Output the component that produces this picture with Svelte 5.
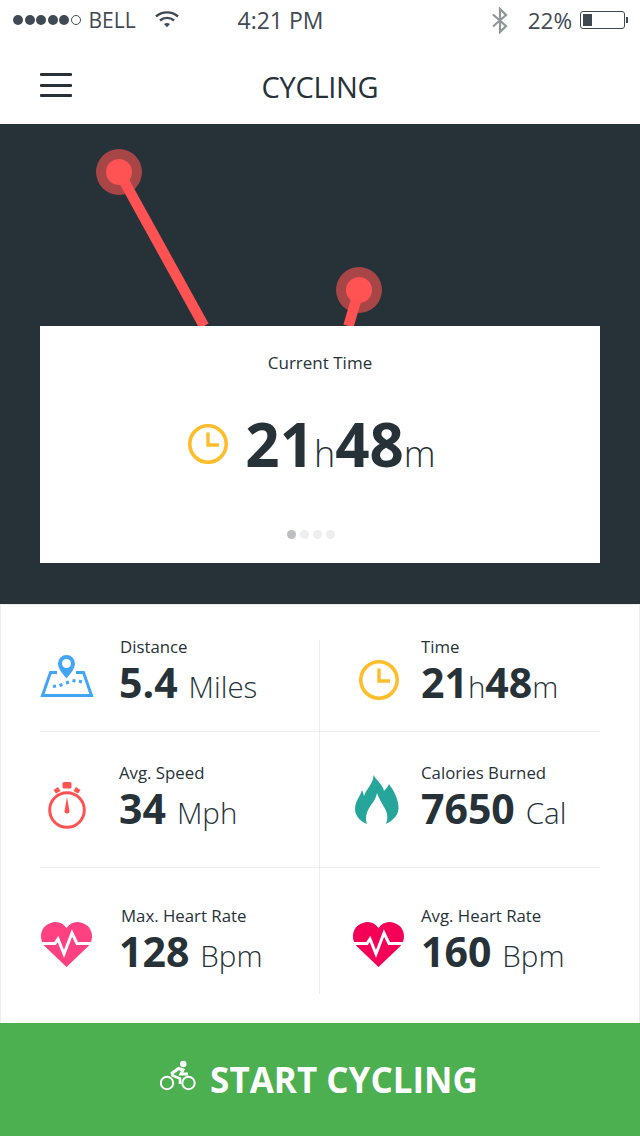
<script lang="ts">
	const stats = [
		{ label: 'Distance', value: '5.4', unit: 'Miles', icon: 'map' },
		{ label: 'Time', time: true, icon: 'clock' },
		{ label: 'Avg. Speed', value: '34', unit: 'Mph', icon: 'watch' },
		{ label: 'Calories Burned', value: '7650', unit: 'Cal', icon: 'flame' },
		{ label: 'Max. Heart Rate', value: '128', unit: 'Bpm', icon: 'heart', color: '#ff4081' },
		{ label: 'Avg. Heart Rate', value: '160', unit: 'Bpm', icon: 'heart', color: '#f50057' }
	];
</script>

{#snippet clock(size)}
	<svg width={size} height={size} viewBox="0 0 40 40" fill="none" stroke="#fdbd2c">
		<circle cx="20" cy="20" r="18.2" stroke-width="3.6" />
		<path d="M20 8.5V21H31" stroke-width="3.4" />
	</svg>
{/snippet}

<div class="page">
	<header class="status">
		<div class="dots">
			{#each [1, 2, 3, 4, 5] as d}
				<i class="dot"></i>
			{/each}
			<i class="dot empty"></i>
		</div>
		<span class="carrier">BELL</span>
		<svg class="wifi" width="24" height="18" viewBox="0 0 24 18" fill="none" stroke="#414a52" stroke-width="2.4">
			<path d="M1 6.5C7 1 17 1 23 6.5" />
			<path d="M5 10.5C9 7 15 7 19 10.5" />
			<path d="M9 14l3 3.2 3-3.2c-2-1.4-4-1.4-6 0z" fill="#414a52" stroke="none" />
		</svg>
		<span class="clock-text">4:21 PM</span>
		<div class="right">
			<svg width="18" height="27" viewBox="0 0 18 27" fill="none" stroke="#8f9598" stroke-width="2.2">
				<path d="M2 7.5L15 19 9 25V2l6 6L2 19.5" />
			</svg>
			<span class="percent">22%</span>
			<div class="battery"><div class="level"></div></div>
			<i class="nub"></i>
		</div>
	</header>

	<nav class="nav">
		<button class="menu" aria-label="Menu"><i></i><i></i><i></i></button>
		<h1>CYCLING</h1>
	</nav>

	<section class="hero">
		<svg class="chart" width="640" height="202" viewBox="0 0 640 202">
			<line x1="119" y1="48" x2="204" y2="202" stroke="#ff5252" stroke-width="10.500" />
			<circle cx="119" cy="48" r="23" fill="#ff5252" fill-opacity="0.6" />
			<circle cx="119" cy="48" r="13" fill="#ff5252" />
			<line x1="359" y1="166" x2="348.500" y2="202" stroke="#ff5252" stroke-width="10.500" />
			<circle cx="359" cy="166" r="23" fill="#ff5252" fill-opacity="0.6" />
			<circle cx="359" cy="166" r="13" fill="#ff5252" />
		</svg>
		<div class="card">
			<p class="card-label">Current Time</p>
			<div class="card-time">
				{@render clock(40)}
				<div class="big"><b>21</b><span>h</span><b>48</b><span>m</span></div>
			</div>
			<div class="pager">
				<i class="on"></i><i></i><i></i><i></i>
			</div>
		</div>
	</section>

	<section class="stats">
		{#each stats as s}
			<div class="cell">
				<div class="icon icon-{s.icon}">
					{#if s.icon === 'clock'}
						{@render clock(40)}
					{:else if s.icon === 'map'}
						<svg width="54" height="43" viewBox="0 0 54 43">
							<path d="M17 17.500H10.500L2.500 40.500H51.500L43.500 17.500H36" fill="none" stroke="#42a5f5" stroke-width="3" />
							<path d="M26.500 23.500C23 19 18 14 18 8.500A8.500 8.500 0 0 1 35 8.500C35 14 30 19 26.500 23.500Z" fill="#42a5f5" />
							<circle cx="26.500" cy="8.500" r="4.500" fill="#fff" />
							<path d="M13 31.500L16 31M19.500 30.500L22.500 29.500M26 28L29 27M32.500 25.500L35.500 26M39 26L42 27" stroke="#42a5f5" stroke-width="3" fill="none" />
						</svg>
					{:else if s.icon === 'watch'}
						<svg width="40" height="48" viewBox="0 0 40 48" fill="#ff5252">
							<circle cx="20" cy="28" r="17.300" fill="none" stroke="#ff5252" stroke-width="3" />
							<rect x="15.500" y="0" width="9" height="6.500" rx="1.500" />
							<path d="M6.500 8L11 5 13.500 9 9 11.500ZM33.500 8L29 5 26.500 9 31 11.500Z" />
							<path d="M20 15L22.500 29A2.500 2.500 0 0 1 17.500 29Z" />
						</svg>
					{:else if s.icon === 'flame'}
						<svg width="44" height="49" viewBox="0 0 44 49" fill="#26a69a">
							<path d="M18.500 0C22 6 28 10 29 16 30.500 14 33 12 34 9 39 16 44 25 43.500 34 43 41 37 46 31 49 33 44 33 38 29 32 27 28 24 24 22 18 21 23 19 26 16 30 13 34 9 42 12 49 6 47 0 41 0 34 0 26 5 22 7 15 8 17 8.500 19 9 21 11 14 18.500 9 18.500 0Z" />
						</svg>
					{:else}
						<svg width="54" height="46" viewBox="0 0 54 46">
							<path d="M26.500 46L5 25.500C-1 19 0 9 6 4.500 13 -1 22 0 26.500 7 31 0 40 -1 47 4.500 53 9 54 19 48 25.500Z" fill={s.color} />
							<path d="M0 22.500H15L18 18 24 33 32 12 37 22.500H53" fill="none" stroke="#fff" stroke-width="3" />
						</svg>
					{/if}
				</div>
				<div class="text">
					<p class="label">{s.label}</p>
					{#if s.time}
						<div class="value tight"><b>21</b><span>h</span><b>48</b><span>m</span></div>
					{:else}
						<div class="value"><b>{s.value}</b><span>{s.unit}</span></div>
					{/if}
				</div>
			</div>
		{/each}
	</section>

	<button class="start">
		<svg width="38" height="32" viewBox="0 0 38 32" fill="none" stroke="#fff" stroke-width="2">
			<circle cx="7" cy="23" r="6.200" />
			<circle cx="28.500" cy="23" r="6.200" />
			<circle cx="23.300" cy="4" r="3.200" fill="#fff" stroke="none" />
			<path d="M11 14L18.500 8.500 23 10 21 14 28 14" stroke-width="3" />
			<path d="M11.500 15L20 18.500V24" stroke-width="2.600" />
		</svg>
		<span>START CYCLING</span>
	</button>
</div>

<style>
	:global(body) {
		margin: 0;
		background: #fff;
	}

	.page {
		width: 640px;
		height: 1136px;
		display: flex;
		flex-direction: column;
		font-family: 'Open Sans', sans-serif;
		color: #263238;
		overflow: hidden;
	}

	p, h1 {
		margin: 0;
	}

	.status {
		height: 40px;
		flex: none;
		display: flex;
		align-items: center;
		color: #414a52;
		font-size: 23px;
		padding: 0 12px 0 13px;
	}

	.dots {
		display: flex;
		gap: 1.500px;
	}

	.dot {
		width: 10px;
		height: 10px;
		border-radius: 50%;
		background: #414a52;
	}

	.dot.empty {
		background: #fff;
		border: 1px solid #414a52;
		box-sizing: border-box;
	}

	.carrier {
		margin-left: 8px;
		font-size: 21px;
		width: 66px;
	}

	.wifi {
		margin-top: -2px;
	}

	.clock-text {
		margin-left: 59px;
	}

	.right {
		margin-left: auto;
		display: flex;
		align-items: center;
	}

	.percent {
		margin: 0 8px 0 19px;
		font-size: 22.500px;
	}

	.battery {
		width: 45px;
		height: 18px;
		border: 1px solid #414a52;
		border-radius: 3px;
		padding: 2px;
		box-sizing: border-box;
	}

	.level {
		width: 9px;
		height: 100%;
		background: #414a52;
	}

	.nub {
		width: 2px;
		height: 6px;
		background: #414a52;
		margin-left: 1px;
	}

	.nav {
		height: 84px;
		flex: none;
		position: relative;
		display: flex;
		align-items: center;
		justify-content: center;
		padding-top: 8px;
		box-sizing: border-box;
	}

	.menu {
		position: absolute;
		left: 40px;
		top: 33px;
		width: 32px;
		padding: 0;
		border: 0;
		background: none;
		display: flex;
		flex-direction: column;
		gap: 7.500px;
	}

	.menu i {
		height: 3px;
		background: #263238;
		border-radius: 1px;
	}

	h1 {
		font-size: 29px;
		font-weight: 400;
		letter-spacing: -0.3px;
		color: #263238;
	}

	.hero {
		height: 480px;
		background: #263238;
		flex: none;
	}

	.chart {
		display: block;
	}

	.card {
		margin: 0 40px;
		height: 237px;
		background: #fff;
		display: flex;
		flex-direction: column;
		align-items: center;
		box-sizing: border-box;
		padding-top: 26px;
	}

	.card-label {
		font-size: 17px;
		line-height: 22px;
	}

	.card-time {
		display: flex;
		align-items: center;
		gap: 17px;
		margin: 37px 16px 0 0;
		height: 66px;
	}

	.big {
		font-size: 36px;
		font-weight: 300;
		white-space: nowrap;
	}

	.big b {
		font-size: 60px;
		font-weight: 700;
		line-height: 66px;
	}

	.pager {
		display: flex;
		gap: 4px;
		margin: 53px 18px 0 0;
	}

	.pager i {
		width: 9px;
		height: 9px;
		border-radius: 50%;
		background: #eeeeee;
	}

	.pager i.on {
		background: #bdbfc2;
	}

	.stats {
		flex: 1;
		display: grid;
		grid-template-columns: 279px 1fr;
		grid-template-rows: 92px 136px 126px;
		padding: 35px 39px 29px;
		box-sizing: border-box;
		border: 1px solid #eceeef;
		border-bottom: 0;
	}

	.cell {
		display: flex;
		align-items: flex-start;
		box-sizing: border-box;
		border-bottom: 1px solid #eceeef;
	}

	.cell:nth-child(n + 3) {
		padding-top: 34px;
	}

	.cell:nth-child(n + 5) {
		padding-top: 41px;
		border-bottom: 0;
	}

	.cell:nth-child(even) {
		border-left: 1px solid #eceeef;
		padding-left: 32px;
	}

	.icon {
		width: 54px;
		display: flex;
		justify-content: center;
		flex: none;
	}

	.icon-map {
		margin-top: 15px;
	}

	.icon-clock {
		margin-top: 20px;
	}

	.icon-watch {
		margin-top: 16px;
	}

	.icon-flame {
		margin-top: 9px;
		padding-right: 5px;
		box-sizing: border-box;
	}

	.icon-heart {
		margin-top: 12px;
	}

	.text {
		margin-left: 25px;
	}

	.cell:nth-child(even) .text {
		margin-left: 15px;
	}

	.cell:nth-child(1) .label {
		margin-left: 1px;
	}

	.cell:nth-child(5) .label {
		margin-left: 2px;
	}

	.label {
		font-size: 16.800px;
		line-height: 14px;
		font-weight: 400;
	}

	.value {
		font-size: 29.500px;
		font-weight: 300;
		white-space: nowrap;
		line-height: 52px;
		margin-top: 2px;
	}

	.value b {
		font-size: 41px;
		font-weight: 700;
		margin-right: 11px;
	}

	.value.tight b {
		margin-right: 0;
	}

	.start {
		height: 113px;
		flex: none;
		border: 0;
		background: #4caf50;
		color: #fff;
		font-family: inherit;
		display: flex;
		align-items: center;
		justify-content: center;
		gap: 12px;
		font-size: 35px;
		font-weight: 700;
		padding: 0 2px 0 0;
	}

	.start svg {
		margin-top: -7px;
	}
</style>
